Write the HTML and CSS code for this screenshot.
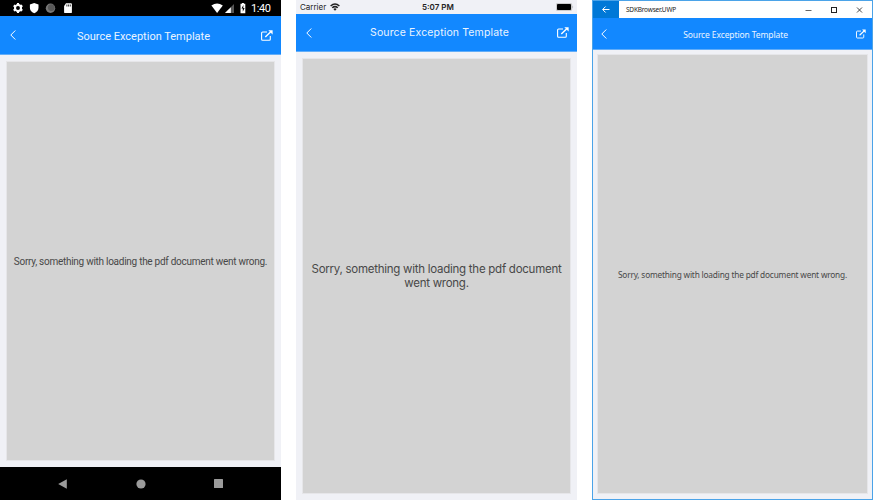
FILE: index.html
```html
<!DOCTYPE html>
<html lang="en">
<head>
<meta charset="utf-8">
<title>Source Exception Template</title>
<link rel="stylesheet" href="styles.css">
</head>
<body>
<svg class="defs" width="0" height="0">
  <symbol id="back" viewBox="0 0 6 10"><path d="M5.3.5.8 5l4.5 4.5" fill="none" stroke="currentColor"/></symbol>
  <symbol id="share" viewBox="0 0 12 11"><path d="M6 2H1.6Q.6 2 .6 3v6.3q0 1 1 1h6.700q1 0 1-1V6" fill="none" stroke="currentColor" stroke-width="1.1"/><path d="M4.300 7 10 1.600" fill="none" stroke="currentColor" stroke-width="1.4"/><path d="M7.300.2h4.300v4.300z" fill="currentColor"/></symbol>
  <symbol id="wifi" viewBox="0 0 10 8"><path d="M.6 3Q5-.9 9.400 3M2.200 4.800q2.800-2.400 5.600 0" fill="none" stroke="currentColor" stroke-width="1.5"/><path d="M3.300 6q1.700-1.300 3.400 0L5 7.800z" fill="currentColor"/></symbol>
</svg>
<main class="screens">
  <section class="screen android">
    <div class="status">
      <svg class="left-icons" width="62" height="12" viewBox="0 0 62 12">
        <circle cx="6" cy="6" r="3" fill="none" stroke="#fff" stroke-width="2.1"/>
        <path d="M6 1v2M6 9v2M1.700 3.500l1.700 1M8.600 7.500l1.700 1M1.700 8.500l1.700-1M8.600 4.500l1.700-1" stroke="#fff" stroke-width="2.1"/>
        <path d="M22.200.9l4.300 1.600v3.200q0 3.800-4.300 5.500-4.300-1.700-4.300-5.500V2.500z" fill="#fff"/>
        <circle cx="38.500" cy="6.200" r="4.700" fill="#777"/><circle cx="39.300" cy="5.600" r="3.400" fill="#595959"/>
        <path d="M54 1.300h5q.900 0 .900.900v8q0 .900-.900.900h-6q-.900 0-.900-.900V4z" fill="#fff"/><path d="M54.900 2.500v2M56.600 2.500v2M58.300 2.500v2" stroke="#000" stroke-width=".8"/>
      </svg>
      <svg class="right-icons" width="36" height="12" viewBox="0 0 36 12">
        <path d="M.400 3.600q5.700-4.400 11.400 0L6.100 11z" fill="#fff"/>
        <path d="M23 2v9h-9z" fill="#555"/><path d="M19.800 5.200V11H14z" fill="#fff"/>
        <path d="M29.500 1.800h1.400V1h2v.8h1.400v9.400h-4.800z" fill="#fff"/><path d="M32.400 3 30.500 6.500h1.300V9.800l1.800-3.900h-1.300z" fill="#000"/>
      </svg>
      <span class="time">1:40</span>
    </div>
    <header class="bar"><svg class="back"><use href="#back"/></svg><h1>Source Exception Template</h1><svg class="share"><use href="#share"/></svg></header>
    <div class="content"><div class="panel"><p>Sorry, something with loading the pdf document went wrong.</p></div></div>
    <nav class="nav">
      <svg width="9" height="10" viewBox="0 0 9 10"><path d="M.2 5 8.800.2v9.600z" fill="#9b9b9b"/></svg>
      <svg width="10" height="10" viewBox="0 0 10 10"><circle cx="5" cy="5" r="4.600" fill="#9b9b9b"/></svg>
      <svg width="9" height="9" viewBox="0 0 9 9"><rect width="9" height="9" rx=".5" fill="#9b9b9b"/></svg>
    </nav>
  </section>

  <section class="screen ios">
    <div class="status">
      <span class="carrier">Carrier</span><svg class="wifi"><use href="#wifi"/></svg>
      <span class="time">5:07 PM</span>
      <svg class="battery" width="18" height="8" viewBox="0 0 18 8"><rect x=".3" y=".3" width="15.400" height="7.400" rx="1.500" fill="#fff" stroke="#999" stroke-width=".6"/><rect x="1" y="1" width="14" height="6" rx=".8" fill="#000"/><path d="M16.600 2.800q1 1.200 0 2.400z" fill="#777"/></svg>
    </div>
    <header class="bar"><svg class="back"><use href="#back"/></svg><h1>Source Exception Template</h1><svg class="share"><use href="#share"/></svg></header>
    <div class="content"><div class="panel"><p>Sorry, something with loading the pdf document<br>went wrong.</p></div></div>
  </section>

  <section class="screen windows">
    <div class="status">
      <div class="win-back"><svg width="8" height="7" viewBox="0 0 8 7"><path d="M7.500 3.500H.8M3.600.5l-3 3 3 3" fill="none" stroke="#fff"/></svg></div>
      <span class="app">SDKBrowser.UWP</span>
      <svg class="controls" width="60" height="8" viewBox="0 0 60 8"><path d="M.500 4.500h6" stroke="#666"/><rect x="26.500" y="1.500" width="5" height="5" fill="none" stroke="#222"/><path d="m52 1.500 5 5m0-5-5 5" stroke="#333" stroke-width=".9"/></svg>
    </div>
    <header class="bar"><svg class="back"><use href="#back"/></svg><h1>Source Exception Template</h1><svg class="share"><use href="#share"/></svg></header>
    <div class="content"><div class="panel"><p>Sorry, something with loading the pdf document went wrong.</p></div></div>
  </section>
</main>
</body>
</html>
```
FILE: styles.css
```css
* { box-sizing: border-box; }
body { margin: 0; background: #fff; overflow: hidden; }
svg { display: block; flex: none; }
.defs { position: absolute; }
h1, p { margin: 0; font-weight: 400; white-space: nowrap; }
.screens { display: flex; gap: 15px; width: 873px; height: 500px; }
.screen { display: flex; flex-direction: column; width: 281px; height: 500px; background: #f0f1f6; }
.status, .bar { display: flex; align-items: center; flex: none; white-space: nowrap; }
.bar { background: #1288ff; color: #fff; border-bottom: 1px solid #62adf8; }
.bar h1 { flex: 1; text-align: center; color: #eaf4ff; }
.back { width: 6px; height: 10px; }
.share { width: 12px; height: 11px; }
.content { flex: 1; display: flex; min-height: 0; }
.panel { flex: 1; min-width: 0; display: flex; align-items: center; justify-content: center; background: #d3d3d3; outline: 1px solid #e6e6e9; color: #484848; text-align: center; }

.android { font-family: Roboto, sans-serif; }
.android .status { height: 16px; background: #000; color: #fff; padding: 0 11px 0 12px; }
.android .right-icons { margin-left: auto; }
.android .time { font-size: 11px; line-height: 16px; margin-left: 4px; padding-top: 1px; width: 19px; letter-spacing: -.4px; }
.android .bar { height: 39px; padding: 0 8px 0 10px; }
.android h1 { font-size: 11px; padding: 2px 0 0 10px; }
.android .content { padding: 7px; }
.android .panel { font-size: 10px; letter-spacing: -.27px; }
.android .nav { height: 33px; background: #000; display: flex; justify-content: space-between; align-items: center; padding: 0 58px; }

.ios { font-family: Inter, sans-serif; }
.ios .status { height: 14px; padding: 0 3px 0 4px; color: #222; font-size: 8px; }
.ios .carrier { width: 27px; }
.ios .wifi { width: 10px; height: 8px; margin-left: 3px; }
.ios .time { margin-left: 82px; font-weight: 600; }
.ios .battery { margin-left: auto; }
.ios .bar { height: 38px; padding: 0 8px 0 10px; }
.ios h1 { font-size: 10.5px; letter-spacing: .14px; padding-left: 10px; }
.ios .content { padding: 7px; }
.ios .panel { font-size: 11.5px; letter-spacing: -.26px; line-height: 14px; }

.windows { border: 1px solid #4ba3e8; font-family: "Noto Sans", sans-serif; }
.windows .status { height: 17px; background: #fff; padding-right: 7px; color: #222; }
.windows .win-back { width: 26px; height: 17px; background: #0078d7; display: flex; align-items: center; justify-content: center; }
.windows .app { font-size: 6.5px; letter-spacing: -.2px; margin-left: 7px; }
.windows .controls { margin-left: auto; }
.windows .bar { height: 32px; padding: 0 6px 0 8px; }
.windows .share { width: 10px; height: 10px; }
.windows h1 { font-size: 8.5px; letter-spacing: -.11px; padding: 1px 0 0 8px; }
.windows .content { padding: 5px 5px 6px; }
.windows .panel { font-size: 8.3px; letter-spacing: -.19px; }
```
